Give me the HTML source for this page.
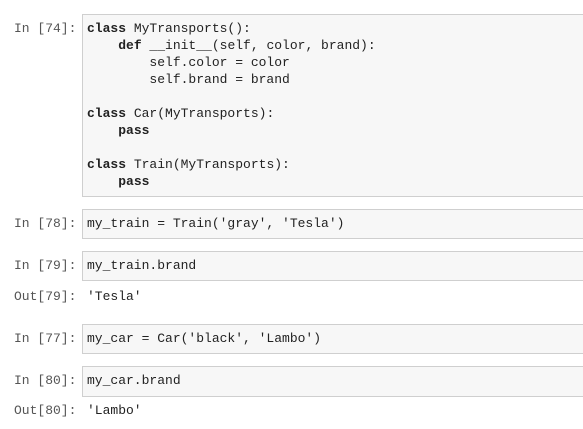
<!DOCTYPE html>
<html><head><style>
body{margin:0;background:#fff;width:583px;height:429px;overflow:hidden;position:relative;font-family:"Liberation Mono",monospace;font-size:13px;color:#333}
.p{position:absolute;left:14px;color:#555;line-height:17px;white-space:pre}
.b{position:absolute;left:82px;width:520px;background:#f7f7f7;border:1px solid #cfcfcf;box-sizing:border-box;padding:5px 4px;line-height:17px;white-space:pre;color:#222}
.o{position:absolute;left:87px;line-height:17px;white-space:pre;color:#222}
b{font-weight:bold;color:#222}
</style></head><body>
<div class="p" style="top:20px">In [74]:</div>
<div class="b" style="top:14px;height:183px"><b>class</b> MyTransports():
    <b>def</b> __init__(self, color, brand):
        self.color = color
        self.brand = brand

<b>class</b> Car(MyTransports):
    <b>pass</b>

<b>class</b> Train(MyTransports):
    <b>pass</b></div>
<div class="p" style="top:215px">In [78]:</div>
<div class="b" style="top:209px;height:30px">my_train = Train('gray', 'Tesla')</div>
<div class="p" style="top:257px">In [79]:</div>
<div class="b" style="top:251px;height:30px">my_train.brand</div>
<div class="p" style="top:288px">Out[79]:</div>
<div class="o" style="top:288px">'Tesla'</div>
<div class="p" style="top:330px">In [77]:</div>
<div class="b" style="top:324px;height:30px">my_car = Car('black', 'Lambo')</div>
<div class="p" style="top:372px">In [80]:</div>
<div class="b" style="top:366px;height:31px">my_car.brand</div>
<div class="p" style="top:402px">Out[80]:</div>
<div class="o" style="top:402px">'Lambo'</div>
</body></html>
